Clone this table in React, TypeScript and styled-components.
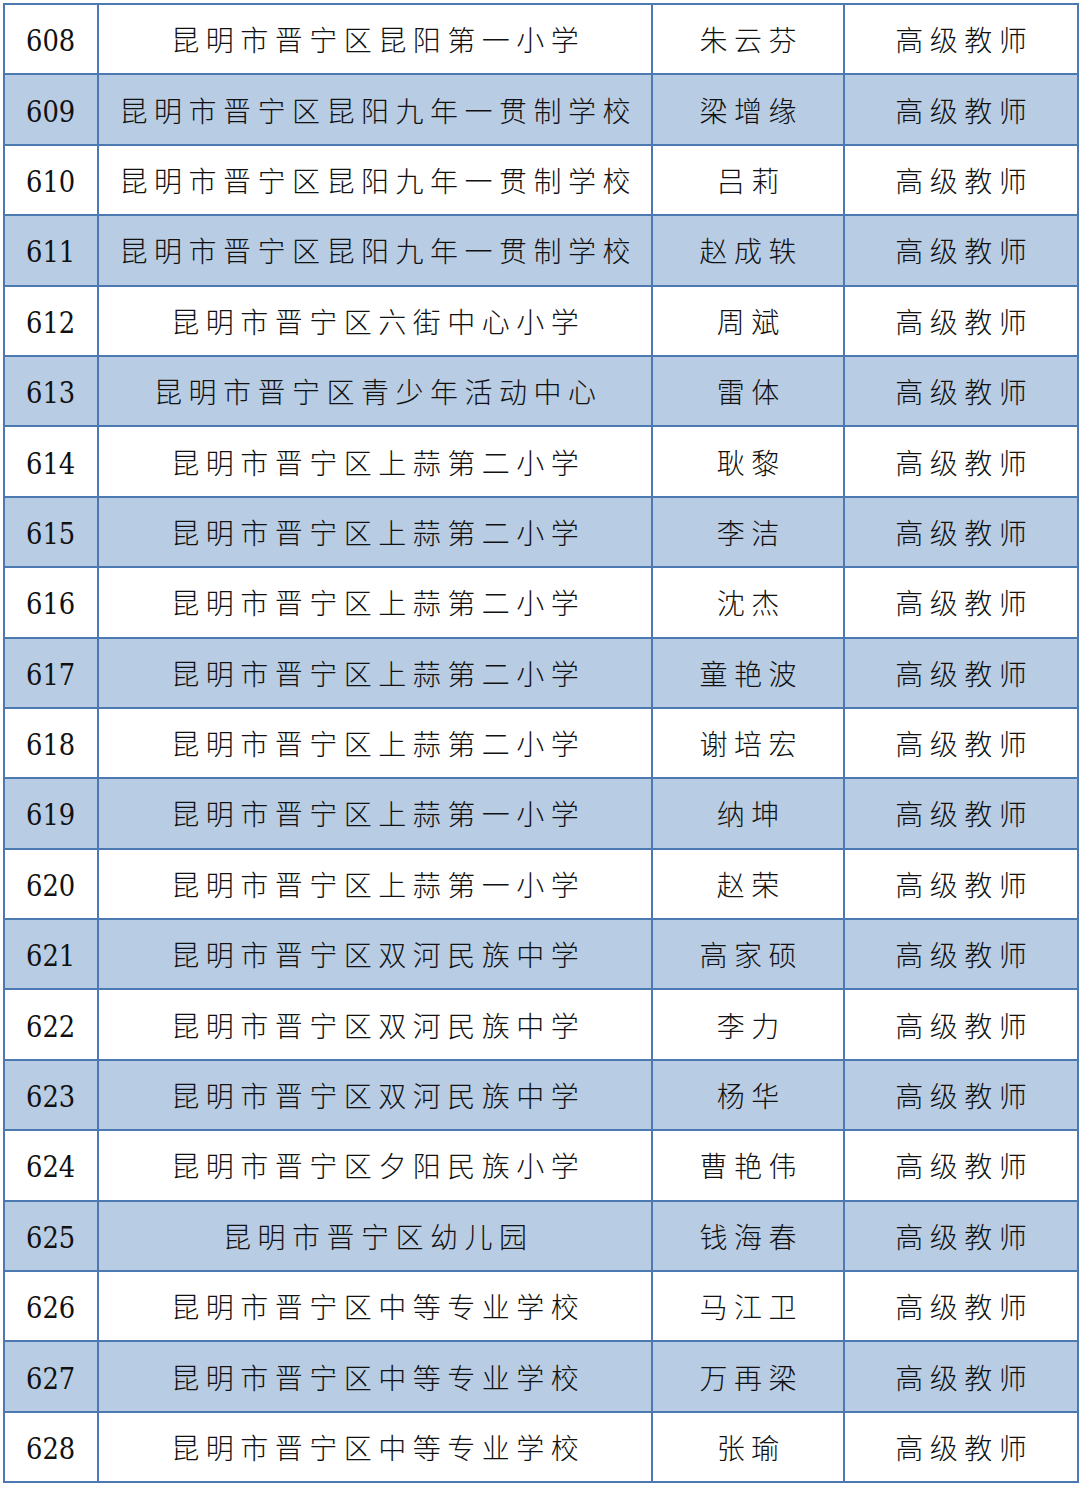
import styled, { createGlobalStyle } from 'styled-components';

type Row = {
  no: number;
  school: string;
  name: string;
};

const rows: Row[] = [
  { no: 608, school: '昆明市晋宁区昆阳第一小学', name: '朱云芬' },
  { no: 609, school: '昆明市晋宁区昆阳九年一贯制学校', name: '梁增缘' },
  { no: 610, school: '昆明市晋宁区昆阳九年一贯制学校', name: '吕莉' },
  { no: 611, school: '昆明市晋宁区昆阳九年一贯制学校', name: '赵成轶' },
  { no: 612, school: '昆明市晋宁区六街中心小学', name: '周斌' },
  { no: 613, school: '昆明市晋宁区青少年活动中心', name: '雷体' },
  { no: 614, school: '昆明市晋宁区上蒜第二小学', name: '耿黎' },
  { no: 615, school: '昆明市晋宁区上蒜第二小学', name: '李洁' },
  { no: 616, school: '昆明市晋宁区上蒜第二小学', name: '沈杰' },
  { no: 617, school: '昆明市晋宁区上蒜第二小学', name: '童艳波' },
  { no: 618, school: '昆明市晋宁区上蒜第二小学', name: '谢培宏' },
  { no: 619, school: '昆明市晋宁区上蒜第一小学', name: '纳坤' },
  { no: 620, school: '昆明市晋宁区上蒜第一小学', name: '赵荣' },
  { no: 621, school: '昆明市晋宁区双河民族中学', name: '高家硕' },
  { no: 622, school: '昆明市晋宁区双河民族中学', name: '李力' },
  { no: 623, school: '昆明市晋宁区双河民族中学', name: '杨华' },
  { no: 624, school: '昆明市晋宁区夕阳民族小学', name: '曹艳伟' },
  { no: 625, school: '昆明市晋宁区幼儿园', name: '钱海春' },
  { no: 626, school: '昆明市晋宁区中等专业学校', name: '马江卫' },
  { no: 627, school: '昆明市晋宁区中等专业学校', name: '万再梁' },
  { no: 628, school: '昆明市晋宁区中等专业学校', name: '张瑜' },
];

const GlobalStyle = createGlobalStyle`
  body {
    margin: 0;
    background: #ffffff;
  }
`;

const Page = styled.div`
  padding: 3px 3px 0 3px;
`;

const Table = styled.table`
  width: 1074px;
  border-collapse: collapse;
  table-layout: fixed;
  border: 2px solid #4d79b3;
`;

const Col = styled.col<{ w: number }>`
  width: ${({ w }) => w}px;
`;

const Tr = styled.tr<{ shaded: boolean }>`
  height: 70.4px;
  background: ${({ shaded }) => (shaded ? '#b8cce4' : '#ffffff')};
`;

const Td = styled.td`
  border: 2px solid #4d79b3;
  padding: 0;
  text-align: center;
  vertical-align: middle;
  color: #111;
  font-family: 'Noto Sans CJK SC', sans-serif;
  font-weight: 300;
  font-size: 28px;
  letter-spacing: 6.5px;
  text-indent: 6.5px;
  white-space: nowrap;
`;

const NoCell = styled.td`
  border: 2px solid #4d79b3;
  padding: 3px 0 0;
  text-align: center;
  vertical-align: middle;
`;

// Times-like digits: serif face, squeezed a little to match the narrow originals
const Num = styled.span`
  display: inline-block;
  font-family: 'DejaVu Serif', serif;
  font-weight: 400;
  font-size: 30px;
  color: #111;
  transform: scaleX(0.86);
`;

const App = () => {
  return (
    <Page>
      <GlobalStyle />
      <Table>
        <colgroup>
          <Col w={94} />
          <Col w={554} />
          <Col w={192} />
          <Col w={234} />
        </colgroup>
        <tbody>
          {rows.map((r, i) => (
            <Tr key={r.no} shaded={i % 2 === 1}>
              <NoCell>
                <Num>{r.no}</Num>
              </NoCell>
              <Td>{r.school}</Td>
              <Td>{r.name}</Td>
              <Td>高级教师</Td>
            </Tr>
          ))}
        </tbody>
      </Table>
    </Page>
  );
};

export default App;
